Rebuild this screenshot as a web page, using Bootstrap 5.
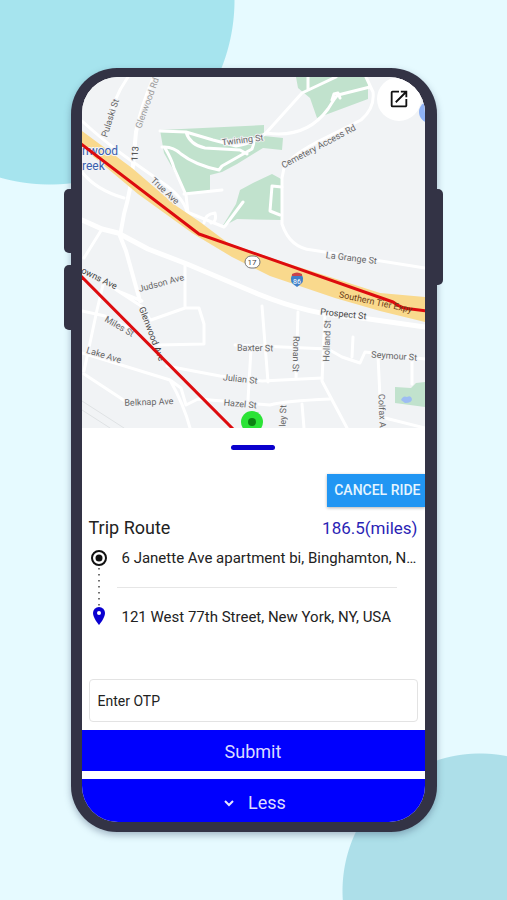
<!DOCTYPE html>
<html lang="en">
<head>
<meta charset="utf-8">
<meta name="viewport" content="width=device-width, initial-scale=1">
<title>Trip Route</title>
<link href="https://cdn.jsdelivr.net/npm/bootstrap@5.3.0/dist/css/bootstrap.min.css" rel="stylesheet">
<style>
  body { font-family: Roboto, "Liberation Sans", sans-serif; color: #222; background: #e6faff; }
  .stage {
    min-height: 100vh; padding: 68px 64px;
    background:
      radial-gradient(circle at 50px 0, #a6e4ee 184px, transparent 185px),
      radial-gradient(circle at calc(100% - 27px) calc(100% - 9px), #addfe9 137px, transparent 138px),
      #e6faff;
  }
  .phone {
    width: 100%; max-width: 366px; background: #333345; border-radius: 46px;
    padding: 9px 12px 10px 11px; box-shadow: 0 3px 7px rgba(60, 80, 110, .4);
  }
  .side-key { position: absolute; width: 8px; background: #333345; }
  .key-up { left: -7px; top: 121px; height: 64px; border-radius: 5px 0 0 5px; }
  .key-down { left: -7px; top: 197px; height: 65px; border-radius: 5px 0 0 5px; }
  .key-power { right: -6px; top: 121px; height: 96px; border-radius: 0 5px 5px 0; }
  .screen { border-radius: 36px; }
  .map { width: 100%; height: auto; }
  .map text { font-family: Roboto, "Liberation Sans", sans-serif; font-size: 9px; fill: #666; stroke: #f3f4f6; stroke-width: 2px; paint-order: stroke; text-anchor: middle; }
  .map .place { font-size: 12px; fill: #3a5fae; text-anchor: start; }
  .map .dark { fill: #444; }
  .map .pale { fill: #999; }
  .open-btn { top: 0; right: 4px; width: 44px; height: 44px; }
  .handle { width: 44px; height: 5px; background: #0a00cd; margin-top: 17px; margin-bottom: 24px; }
  .btn-cancel { height: 33px; padding: 0 4px 0 7px; font-size: 14px; font-weight: 500; color: #e6f5ff; background: #2196f3; box-shadow: 0 1px 3px rgba(0, 0, 0, .3); }
  .btn-cancel:hover { color: #fff; background: #1787e0; }
  .trip { padding: 8px 7px 0; }
  .trip-title { font-size: 18px; line-height: 26px; }
  .distance { font-size: 17px; color: #2b1fb5; }
  .stops { padding-top: 1px; }
  .rail { width: 20px; height: 84px; padding-top: 8px; }
  .stop-list { font-size: 15px; line-height: 32px; padding-left: 13px; }
  .split { height: 1px; background: #e6e6e6; margin: 13px 21px 13px -5px; }
  .otp { height: 43px; padding: 0 8px; font-size: 14px; color: #222; border: 1px solid #e3e3e3; border-radius: 4px; }
  .otp::placeholder { color: #222; opacity: 1; }
  .otp-wrap { padding: 46px 7px 8px; }
  .btn-blue { background: #0000fe; color: #dcdcff; font-size: 18px; line-height: 24px; }
  .btn-blue:hover { background: #0000e0; color: #fff; }
  .btn-submit { height: 41px; padding: 2px 0 0; margin-bottom: 8px; }
  .btn-less { height: 43px; padding: 4px 0 0; gap: 10px; }
</style>
<script src="https://cdn.jsdelivr.net/npm/bootstrap@5.3.0/dist/js/bootstrap.bundle.min.js"></script>
</head>
<body>
<div class="stage d-flex justify-content-center align-items-start">
  <div class="phone position-relative">
    <span class="side-key key-up"></span><span class="side-key key-down"></span><span class="side-key key-power"></span>
    <main class="screen bg-white overflow-hidden position-relative d-flex flex-column">
      <svg class="map d-block" viewBox="82 77 343 351" role="img" aria-label="Route map">
        <rect x="82" y="77" width="343" height="351" fill="#f1f3f5"/>
        <g fill="#c1e2cd">
          <path d="M160 130L264 125V136L283 138L282 150L263 148L237 164L222 172L210 175V190L185 193L173 169L164 153Z"/>
          <path d="M296 77H368V99L317 118L310 98L298 88Z"/>
          <path d="M272 174L283 180L282 220L237 219L222 227L236 204L240 190L253 183Z"/>
          <path d="M184 190H212L202 192H183Z"/>
          <path d="M395 387L411 388L416 383L425 382V407L395 403Z"/>
        </g>
        <path d="M401 400q2-5 6-3 4-2 5 2 0 4-7 4z" fill="#9dbcf3"/>
        <circle cx="430" cy="112" r="11" fill="#8fb2f5"/>
        <g fill="none" stroke="#fff" stroke-width="3" stroke-linecap="round" stroke-linejoin="round">
          <path d="M82 220L102 229L118 233L148 249L187 264L258 294Q310 315 355 317L425 327" stroke-width="5"/>
          <path d="M154 77Q142 105 136 132L133 165Q131 190 124 214L120 236L126 251L140 301" stroke-width="4"/>
          <path d="M128 77Q112 100 108 126"/>
          <path d="M82 121Q104 141 126 157L160 181Q183 196 187 212L224 227"/>
          <path d="M82 172Q96 190 124 198M102 229L84 258"/>
          <path d="M160 131L186 132L213 140L236 146Q252 144 266 133M186 132Q190 145 205 148L240 150L247 154M162 147Q173 146 181 154Q195 165 219 170L222 166L252 149Q255 142 253 139"/>
          <path d="M165 148Q172 160 174 168L186 195L188 213M184 194L222 190"/>
          <path d="M266 133L302 93L336 77M308 90V77M266 133Q306 139 328 109Q336 96 338 95L370 87M332 100L334 94L338 93L340 98"/>
          <path d="M366 77L373 92Q375 108 361 120L325 138Q290 155 284 168L282 178V224Q290 248 312 250L425 268"/>
          <path d="M282 187L272 186L270 211L280 215M243 202L225 226M204 223Q205 214 215 213Q217 222 211 223"/>
          <path d="M115 289L144 308L150 320M84 270L120 292L142 301M185 263V308L151 320M185 308H199L204 324V344L158 345M103 285L97 310L84 371M82 311L105 316L140 334"/>
          <path d="M167 366L220 376L262 381L322 378M82 353L170 380Q184 405 190 428M84 374L125 401M170 380L181 388L186 405L198 399L270 405Q284 401 330 399"/>
          <path d="M235 345L328 349L342 357L360 363L365 352L425 359M262 306L268 382M298 312L296 378M325 314L322 381L347 428M353 337L352 357M251 349L248 400M378 356L381 418M412 360V384M385 418L425 428M302 404L304 428"/>
          <path d="M82 401L124 428M82 410L110 428" stroke="#dfe2e4" stroke-width="1"/>
        </g>
        <path d="M82 131L132 168L175 205L200 222L228 243L280 261L380 293L425 297V322L380 311L335 298L270 276L232 257L192 233L138 194L82 147Z" fill="#f9d98d"/>
        <g>
          <text transform="translate(113 119) rotate(-72)">Pulaski St</text>
          <text transform="translate(150 104) rotate(-70)" class="pale">Glenwood Rd</text>
          <text transform="translate(138 154) rotate(-86)" class="dark">113</text>
          <text transform="translate(243 143) rotate(-7)">Twining St</text>
          <text transform="translate(320 149) rotate(-28)">Cemetery Access Rd</text>
          <text transform="translate(163 193) rotate(43)">True Ave</text>
          <text transform="translate(351 261) rotate(7)">La Grange St</text>
          <text transform="translate(162 286) rotate(-15)">Judson Ave</text>
          <text transform="translate(98 281) rotate(26)" class="dark">owns Ave</text>
          <text transform="translate(118 329) rotate(30)">Miles St</text>
          <text transform="translate(149 335) rotate(69)" class="dark">Glenwood Ave</text>
          <text transform="translate(103 358) rotate(17)">Lake Ave</text>
          <text transform="translate(149 405) rotate(-2)">Belknap Ave</text>
          <text transform="translate(255 351) rotate(1)">Baxter St</text>
          <text transform="translate(240 382) rotate(6)">Julian St</text>
          <text transform="translate(240 407) rotate(5)">Hazel St</text>
          <text transform="translate(293 354) rotate(91)">Ronan St</text>
          <text transform="translate(330 341) rotate(-88)">Holland St</text>
          <text transform="translate(394 359) rotate(4)">Seymour St</text>
          <text transform="translate(343 317) rotate(6)" class="dark">Prospect St</text>
          <text transform="translate(379 411) rotate(88)">Colfax A</text>
          <text transform="translate(286 416) rotate(-88)">ley St</text>
          <text x="82" y="155" class="place">nwood</text>
          <text x="82" y="170" class="place">reek</text>
        </g>
        <g fill="none" stroke="#dd0b0e" stroke-width="3" stroke-linejoin="round">
          <path d="M80 143L199 234L393 302Q402 309 411 309L427 311"/>
          <path d="M80 275L234 430"/>
        </g>
        <text transform="translate(375 305) rotate(12)" style="fill:#6b3c16;stroke:none">Southern Tier Expy</text>
        <rect x="245" y="256" width="15" height="12" rx="6" fill="#fff" stroke="#777"/>
        <text x="252" y="265" class="dark" style="font-size:8px;stroke:none">17</text>
        <path d="M292 275q5-3 10 0q4 7-5 12q-9-5-5-12z" fill="#3f7fc9"/>
        <path d="M292 274q5-3 10 0v2h-10z" fill="#c9434a"/>
        <text x="297" y="284" style="font-size:7px;fill:#fff;stroke:none">86</text>
        <circle cx="252" cy="422" r="11" fill="#2be336"/><circle cx="252" cy="422" r="4" fill="#0b8212"/>
      </svg>
      <button type="button" class="open-btn btn bg-white border-0 rounded-circle p-0 position-absolute d-flex align-items-center justify-content-center" aria-label="Open in maps">
        <svg width="22" height="22" viewBox="0 0 24 24" fill="#111"><path d="M19 19H5V5h7V3H5a2 2 0 0 0-2 2v14a2 2 0 0 0 2 2h14c1.100 0 2-.9 2-2v-7h-2v7zM14 3v2h3.590l-9.830 9.830 1.410 1.410L19 6.410V10h2V3h-7z"/></svg>
      </button>

      <div class="handle rounded-pill align-self-center"></div>
      <button type="button" class="btn btn-cancel rounded-0 border-0 align-self-end">CANCEL RIDE</button>

      <section class="trip">
        <div class="trip-title d-flex justify-content-between">
          <h1 class="trip-title fw-normal m-0">Trip Route</h1>
          <span class="distance">186.5(miles)</span>
        </div>
        <div class="stops d-flex">
          <svg class="rail flex-shrink-0" viewBox="0 0 20 76" aria-hidden="true">
            <circle cx="10" cy="8" r="7" fill="none" stroke="#111" stroke-width="2"/><circle cx="10" cy="8" r="3.500" fill="#111"/>
            <path d="M10 18V56" stroke="#444" stroke-width="1.500" stroke-dasharray="1.500 4.500"/>
            <path d="M10 57a6 6 0 0 0-6 6c0 5 6 12 6 12s6-7 6-12a6 6 0 0 0-6-6z" fill="#0a00d0"/><circle cx="10" cy="63" r="2" fill="#fff"/>
          </svg>
          <div class="stop-list flex-grow-1 overflow-hidden">
            <div class="text-truncate">6 Janette Ave apartment bi, Binghamton, N...</div>
            <div class="split"></div>
            <div class="text-truncate">121 West 77th Street, New York, NY, USA</div>
          </div>
        </div>
      </section>

      <form>
        <div class="otp-wrap">
          <label class="visually-hidden" for="otp">Enter OTP</label>
          <input id="otp" type="text" class="otp form-control" placeholder="Enter OTP" inputmode="numeric">
        </div>
        <button type="submit" class="btn btn-blue btn-submit w-100 rounded-0 border-0">Submit</button>
      </form>
      <button type="button" class="btn btn-blue btn-less w-100 rounded-0 border-0 d-flex align-items-center justify-content-center">
        <svg width="18" height="18" viewBox="0 0 18 18" fill="none" stroke="#e6e6ff" stroke-width="2" aria-hidden="true"><path d="M5 7l4 4 4-4"/></svg>
        Less
      </button>
    </main>
  </div>
</div>
</body>
</html>
